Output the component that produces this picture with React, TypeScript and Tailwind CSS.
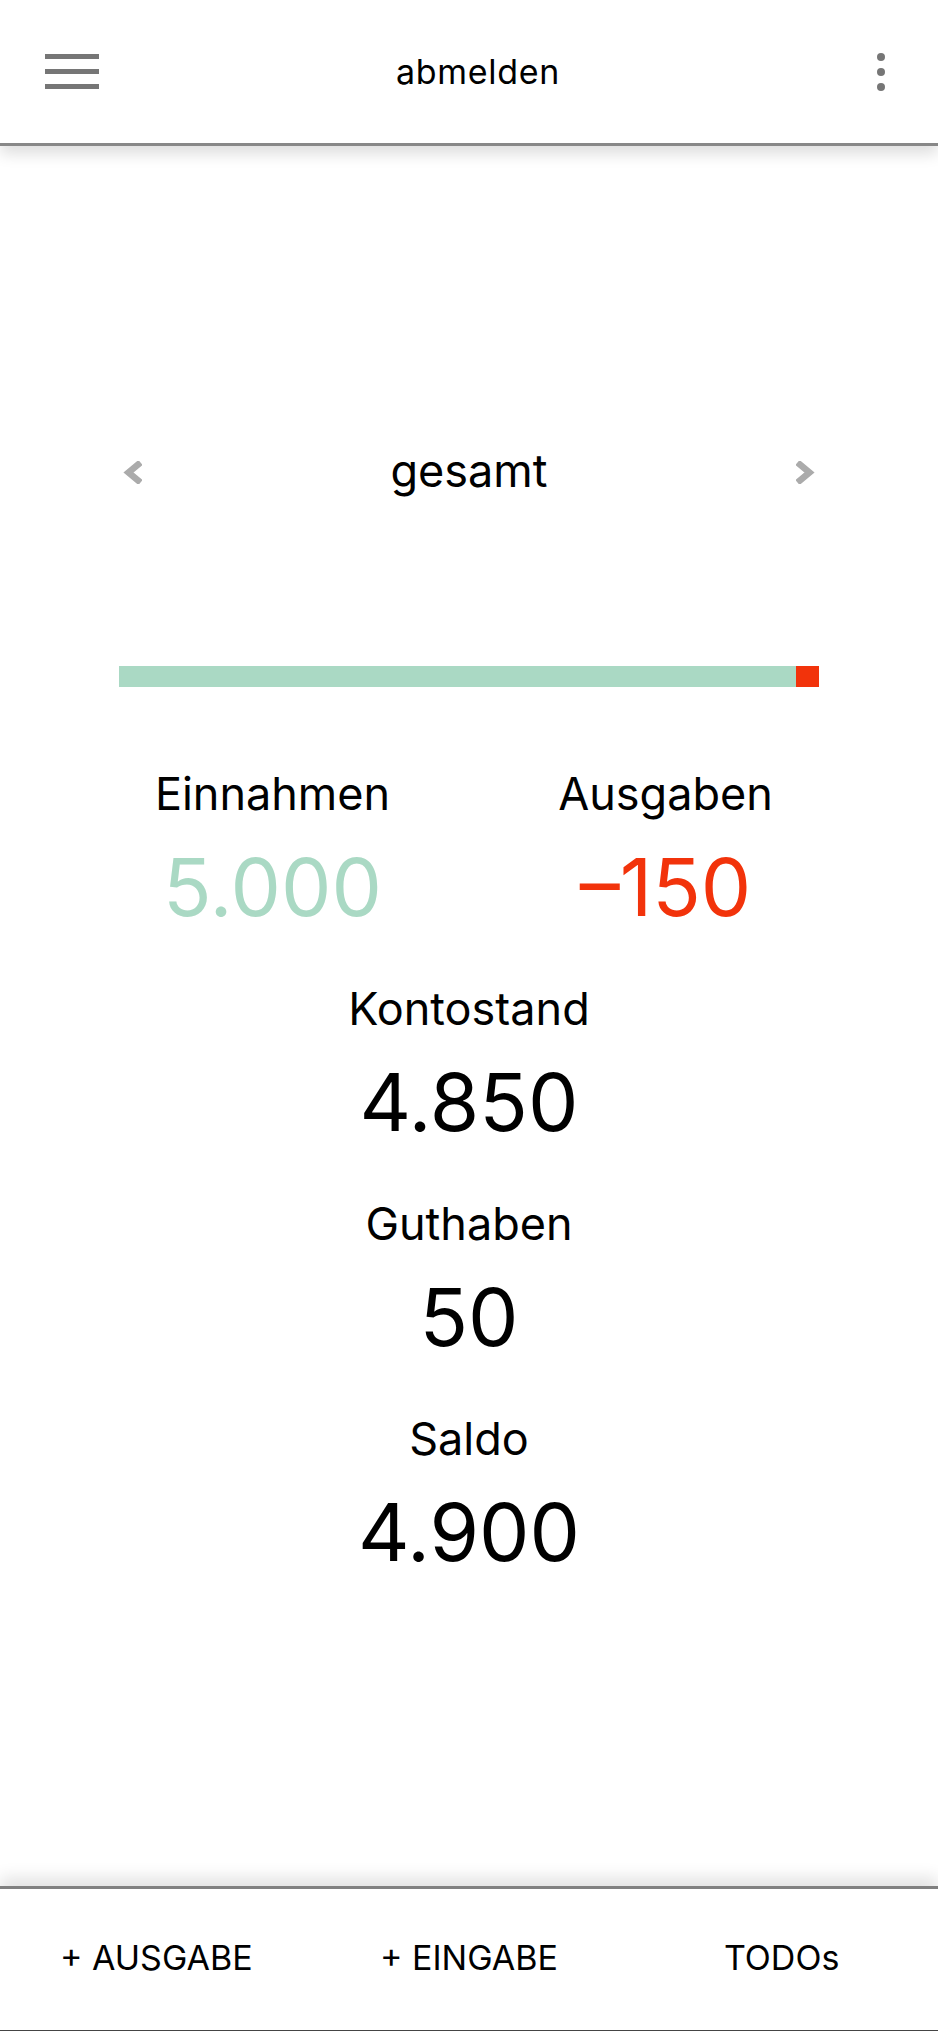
import { useState } from "react";

type Stat = { label: string; value: string };

const Chevron = ({ dir }: { dir: "left" | "right" }) => (
    <svg
        width="19"
        height="23"
        viewBox="0 0 19 23"
        className={dir === "right" ? "rotate-180" : ""}
    >
        <polyline
            points="17.5,1.5 5.5,11.5 17.5,21.5"
            fill="none"
            stroke="#ababab"
            strokeWidth="6.5"
        />
    </svg>
);

const StatBlock = ({
    label,
    value,
    color = "text-black",
}: Stat & { color?: string }) => (
    <div className="flex flex-col items-center mb-[30px]">
        <span className="text-[45px] leading-[60px] text-black">{label}</span>
        <span className={`text-[80px] leading-[125px] ${color}`}>{value}</span>
    </div>
);

const App = () => {
    const [period] = useState("gesamt");

    const einnahmen = 5000;
    const ausgaben = 150;
    // share of the bar taken by income
    const share = (einnahmen / (einnahmen + ausgaben)) * 100;

    return (
        <div
            className="h-screen flex flex-col bg-white text-black"
            style={{ fontFamily: "Inter, 'Liberation Sans', sans-serif" }}
        >
            <header className="relative z-10 h-[146px] shrink-0 flex items-center pl-[45px] pr-[53px] border-b-[3px] border-[#888888] shadow-[0_8px_14px_rgba(0,0,0,0.13)] bg-white">
                <div className="flex flex-col gap-[10px]">
                    <span className="block w-[54px] h-[5px] bg-[#767676]" />
                    <span className="block w-[54px] h-[5px] bg-[#767676]" />
                    <span className="block w-[54px] h-[5px] bg-[#767676]" />
                </div>
                <div className="flex-1 text-center text-[34px] tracking-[0.02em]">
                    abmelden
                </div>
                <div className="pl-[20px] flex flex-col gap-[7px]">
                    <span className="block w-[8px] h-[8px] rounded-full bg-[#767676]" />
                    <span className="block w-[8px] h-[8px] rounded-full bg-[#767676]" />
                    <span className="block w-[8px] h-[8px] rounded-full bg-[#767676]" />
                </div>
            </header>

            <main className="flex-1 flex flex-col items-center pt-[295px]">
                <div className="w-[700px] px-[4px] flex items-center justify-between">
                    <span className="mt-[3px]">
                        <Chevron dir="left" />
                    </span>
                    <span className="text-[45px] leading-[60px]">{period}</span>
                    <span className="mt-[3px]">
                        <Chevron dir="right" />
                    </span>
                </div>

                <div className="w-[700px] h-[21px] mt-[165px] flex bg-[#f2330b]">
                    <div
                        className="h-full bg-[#aad9c4]"
                        style={{ width: `${share > 96.7 ? 96.7 : share}%` }}
                    />
                </div>

                <div className="w-[786px] mt-[77px] grid grid-cols-2">
                    <StatBlock
                        label="Einnahmen"
                        value="5.000"
                        color="text-[#aad9c4]"
                    />
                    <StatBlock
                        label="Ausgaben"
                        value="–150"
                        color="text-[#f2330b]"
                    />
                </div>
                <StatBlock label="Kontostand" value="4.850" />
                <StatBlock label="Guthaben" value="50" />
                <StatBlock label="Saldo" value="4.900" />
            </main>

            <footer className="relative z-10 shrink-0 h-[145px] grid grid-cols-3 items-center pb-[4px] border-t-[3px] border-b border-t-[#808080] border-b-[#444444] shadow-[0_-8px_16px_rgba(0,0,0,0.12)] bg-white text-[34px]">
                <button className="text-center">+ AUSGABE</button>
                <button className="text-center">+ EINGABE</button>
                <button className="text-center">TODOs</button>
            </footer>
        </div>
    );
};

export default App;
